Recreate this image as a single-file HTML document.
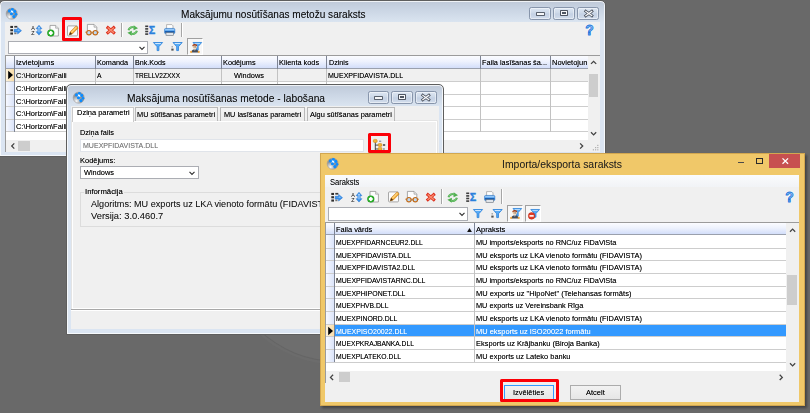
<!DOCTYPE html>
<html lang="lv"><head><meta charset="utf-8"><title>Maksājumu nosūtīšanas metožu saraksts</title>
<style>
html,body{margin:0;padding:0;}
body{width:810px;height:413px;overflow:hidden;background:#696969;position:relative;font-family:"Liberation Sans",sans-serif;}
.t{position:absolute;white-space:pre;line-height:12px;height:12px;transform-origin:0 50%;font-family:"Liberation Sans",sans-serif;}
svg{overflow:visible;display:block;}
</style></head><body>
<div style="position:absolute;left:226.00px;top:139.00px;width:222.00px;height:222.00px;border-radius:50%;background:#6e6e6e;box-shadow:0 0 0 1px #656565,0 0 0 3.5px #6c6c6c;"></div>
<div style="position:absolute;left:-0.70px;top:0.00px;width:606.20px;height:157.30px;box-sizing:border-box;border:1px solid #5e5e5e;border-radius:5px 5px 1px 1px;background:linear-gradient(#bfc9d8 0px,#c9d4e3 8px,#dae4f0 21px,#dbe5f2 22px);box-shadow:inset 0 0 0 1px rgba(255,255,255,.75);overflow:hidden;"><svg style="position:absolute;left:5.90px;top:6.70px" width="11.4" height="11.4" viewBox="0 0 11.4 11.4"><defs><radialGradient id="gg1" cx=".3" cy=".8" r=".45"><stop offset="0" stop-color="#ffffff"/><stop offset=".3" stop-color="#d4d7da"/><stop offset="1" stop-color="#8f959c"/></radialGradient></defs><circle cx="5.700" cy="5.700" r="5.600" fill="url(#gg1)" stroke="#a39a96" stroke-width=".5"/><path d="M5.500 1.500L8.700 3.400 7 5 5.500 5.800 3.500 2.900z" fill="#f2f6fa"/><circle cx="3.500" cy="2.900" r="1.550" fill="#0c8cff"/><circle cx="6.400" cy="1.400" r="1.450" fill="#0c8cff"/><circle cx="8.700" cy="3.400" r="1.550" fill="#0c8cff"/><circle cx="5.500" cy="5.800" r="1.550" fill="#0c8cff"/><circle cx="10" cy="6.300" r="1.350" fill="#0c8cff"/><circle cx="7.900" cy="8.600" r="1.550" fill="#0c8cff"/></svg><span class="t" style="left:180.60px;top:8.40px;font-size:10.2px;transform:scaleX(0.9878);color:#0a0a0a;text-shadow:0 0 .6px rgba(10,10,10,0.3);">Maksājumu nosūtīšanas metožu saraksts</span><div style="position:absolute;left:529.00px;top:6.10px;width:21.60px;height:12.50px;box-sizing:border-box;border:1px solid #8795ab;border-radius:2.3px;background:linear-gradient(#dde6f2,#ccd8e8 48%,#c3d0e3 52%,#d2ddec);box-shadow:inset 0 0 0 1px rgba(255,255,255,.45);"><div style="position:absolute;left:5.8px;top:4px;width:8.4px;height:3.6px;background:#f6f7f9;border:1px solid #59616d;border-radius:.8px;box-sizing:border-box"></div></div><div style="position:absolute;left:552.90px;top:6.10px;width:21.60px;height:12.50px;box-sizing:border-box;border:1px solid #8795ab;border-radius:2.3px;background:linear-gradient(#dde6f2,#ccd8e8 48%,#c3d0e3 52%,#d2ddec);box-shadow:inset 0 0 0 1px rgba(255,255,255,.45);"><div style="position:absolute;left:5.6px;top:1.8px;width:8.4px;height:6.2px;background:#f6f7f9;border:1px solid #4f5662;border-radius:.8px;box-sizing:border-box"></div><div style="position:absolute;left:7.8px;top:4px;width:4px;height:2px;background:#4f5662"></div></div><div style="position:absolute;left:576.80px;top:6.10px;width:21.60px;height:12.50px;box-sizing:border-box;border:1px solid #8795ab;border-radius:2.3px;background:linear-gradient(#dde6f2,#ccd8e8 48%,#c3d0e3 52%,#d2ddec);box-shadow:inset 0 0 0 1px rgba(255,255,255,.45);"><svg style="position:absolute;left:5.4px;top:1.6px" width="9.6" height="7" viewBox="0 0 9.6 7"><path d="M1.800 1.300l6 4.400M7.800 1.300l-6 4.400" stroke="#4f5662" stroke-width="2.900" stroke-linecap="square"/><path d="M1.900 1.400l5.800 4.200M7.700 1.400L1.900 5.600" stroke="#f6f7f9" stroke-width="1.300" stroke-linecap="square"/></svg></div><div style="position:absolute;left:4.90px;top:20.80px;width:595.20px;height:130.40px;background:#f0f0f0;overflow:hidden;"><svg style="position:absolute;left:4.80px;top:3.40px" width="12" height="11" viewBox="0 0 12 11"><rect x="0.3" y="0.9" width="2.7" height="2.1" fill="#2e2e2e"/><rect x="0.3" y="4.2" width="2.7" height="2.1" fill="#2e2e2e"/><rect x="0.3" y="7.5" width="2.7" height="2.1" fill="#2e2e2e"/><rect x="4.3" y=".9" width="3" height="1.7" fill="#3a3a3a"/><rect x="4.3" y="7.5" width="2.2" height="1.7" fill="#777"/><path d="M4.2 4.3h3.4V2.4l3.9 3.3-3.9 3.3V7.1H4.2z" fill="#3b93ec" stroke="#1b6fd0" stroke-width=".5"/><path d="M5 5.2h3.3V4.3l1.6 1.4z" fill="#b9dcff"/></svg><svg style="position:absolute;left:25.30px;top:3.00px" width="11" height="11" viewBox="0 0 11 11"><g style="filter:grayscale(1)"><text x="0.2" y="4.9" font-family="Liberation Sans, sans-serif" font-size="5.4" fill="#111">A</text><text x="0.3" y="10.4" font-family="Liberation Sans, sans-serif" font-size="5.4" fill="#111">Z</text></g><path d="M8 .3l2.900 3.400H9.200v3h1.700L8 10.100 5.100 6.700h1.700v-3H5.100z" fill="#3b93ec" stroke="#1b6fd0" stroke-width=".5"/><path d="M8 1.600l1.200 1.500H8.500v4.200H7.500V3.100h-.7z" fill="#b9dcff"/></svg><svg style="position:absolute;left:41.60px;top:2.80px" width="12" height="12" viewBox="0 0 12 12"><path d="M3 0.4h5.6000000000000005l2.8 2.8v7.8h-8.4z" fill="#fcfcfc" stroke="#8e8e8e" stroke-width=".75"/><path d="M8.600000000000001 0.4v2.8h2.8" fill="#e4e4e4" stroke="#8e8e8e" stroke-width=".55"/><circle cx="3.8" cy="8" r="3.6" fill="#1c961c"/><circle cx="3.8" cy="8" r="2.9" fill="#2fb52f"/><path d="M3.8 6.1v3.8M1.9 8h3.8" stroke="#fff" stroke-width="1.9"/></svg><svg style="position:absolute;left:62.20px;top:2.80px" width="12" height="12" viewBox="0 0 12 12"><rect x=".5" y=".9" width="10" height="10" rx="1" fill="#fbfbfb" stroke="#8e8e8e" stroke-width=".75"/><path d="M2.2 9.9l.9-3 5.9-6 2.2 2-5.9 6.1z" fill="#f3ab35" stroke="#bf7412" stroke-width=".55"/><path d="M4 6.9l5-5.1.8.7-5 5.2z" fill="#ffd98a"/><path d="M2.2 9.9l.9-3 2.1 2.1z" fill="#4a2f16"/></svg><svg style="position:absolute;left:79.40px;top:2.60px" width="14" height="12" viewBox="0 0 14 12"><path d="M2.4 0.4h6.6000000000000005l2.8 2.8v6.000000000000001h-9.4z" fill="#fcfcfc" stroke="#8e8e8e" stroke-width=".75"/><path d="M9.0 0.4v2.8h2.8" fill="#e4e4e4" stroke="#8e8e8e" stroke-width=".55"/><circle cx="3.900" cy="8.700" r="2.200" fill="#bcd8f2" stroke="#c36a16" stroke-width="1.150"/><circle cx="10.300" cy="8.700" r="2.200" fill="#bcd8f2" stroke="#c36a16" stroke-width="1.150"/><path d="M6.300 8.300h1.600M.4 8.200l1.200.2M13.800 8.200l-1.200.2" stroke="#c36a16" stroke-width="1"/></svg><svg style="position:absolute;left:101.00px;top:4.70px" width="9.6" height="8.3" viewBox="0 0 9.6 8.3"><path d="M1.900 1.700l5.800 4.900M7.700 1.700L1.900 6.600" stroke="#dc2a18" stroke-width="3" stroke-linecap="square"/><path d="M2.100 1.900l5.400 4.500M7.500 1.900l-5.400 4.500" stroke="#f8896c" stroke-width="1.400" stroke-linecap="square"/></svg><div style="position:absolute;left:115.80px;top:1.00px;width:1.00px;height:14.60px;background:#a6a6a6;box-shadow:1px 0 0 #fff;"></div><svg style="position:absolute;left:121.60px;top:3.00px" width="11.4" height="11" viewBox="0 0 11.4 11"><path d="M1.5 5.300A4.300 4.300 0 0 1 7.600 2.500" fill="none" stroke="#4fae4f" stroke-width="2.100"/><path d="M6.700 .2L11 3.300 6.500 5.300z" fill="#4fae4f"/><path d="M2 4.600A3.800 3.800 0 0 1 7.400 2.300" fill="none" stroke="#8fd68f" stroke-width=".7"/><g transform="rotate(180 5.700 5.500)"><path d="M1.5 5.300A4.300 4.300 0 0 1 7.600 2.500" fill="none" stroke="#4fae4f" stroke-width="2.100"/><path d="M6.700 .2L11 3.300 6.500 5.300z" fill="#4fae4f"/><path d="M2 4.600A3.800 3.800 0 0 1 7.400 2.300" fill="none" stroke="#8fd68f" stroke-width=".7"/></g></svg><svg style="position:absolute;left:140.20px;top:3.00px" width="11.4" height="11" viewBox="0 0 11.4 11"><rect x="0.2" y="0.5" width="3" height="1.6" fill="#3c3c3c"/><rect x="0.2" y="3.1" width="3" height="1.6" fill="#3c3c3c"/><rect x="0.2" y="5.7" width="3" height="1.6" fill="#3c3c3c"/><rect x="0.2" y="8.3" width="3" height="1.6" fill="#3c3c3c"/><g transform="scale(.98 1)"><text x="3.8" y="9.4" font-family="Liberation Sans, sans-serif" font-size="11" font-weight="bold" fill="#2a80dc" stroke="#2a80dc" stroke-width=".35">Σ</text></g></svg><svg style="position:absolute;left:158.60px;top:2.60px" width="11.4" height="11.8" viewBox="0 0 11.4 11.8"><path d="M2.6 5V.6h5.2l1.2 1.2V5z" fill="#fff" stroke="#8a8a8a" stroke-width=".6"/><rect x=".5" y="4.4" width="10.4" height="5.2" rx="1.2" fill="#56a6f2" stroke="#2a6fbe" stroke-width=".5"/><rect x="1.2" y="5.2" width="9" height="1" fill="#a8d2fb"/><rect x=".9" y="7.1" width="9.6" height="1.5" fill="#1558aa"/><rect x="2" y="8.7" width="7.4" height="2.6" fill="#dfe4ea" stroke="#5c6672" stroke-width=".55"/></svg><div style="position:absolute;left:175.40px;top:1.00px;width:1.00px;height:14.60px;background:#a6a6a6;box-shadow:1px 0 0 #fff;"></div><svg style="position:absolute;left:580.20px;top:1.80px" width="9" height="12" viewBox="0 0 9 12"><g transform="scale(.9 1)"><text x="0.3" y="11.300" font-family="Liberation Sans, sans-serif" font-size="15.500" font-weight="bold" fill="#fff" stroke="#fff" stroke-width="2.200" opacity=".75">?</text><text x="0.3" y="11.300" font-family="Liberation Sans, sans-serif" font-size="15.500" font-weight="bold" fill="#8cc2f8" stroke="#2475d8" stroke-width=".9">?</text></g></svg><div style="position:absolute;left:2.40px;top:18.80px;width:140.20px;height:13.40px;background:#fff;border:1px solid #abadb3;box-sizing:border-box;"><svg style="position:absolute;left:127px;top:0" width="12" height="12" viewBox="0 0 12 12"><path d="M3.5 4.95L6 7.45L8.5 4.95" fill="none" stroke="#333" stroke-width="1.2"/></svg></div><svg style="position:absolute;left:147.80px;top:20.20px" width="10" height="9" viewBox="0 0 10 9"><path transform="translate(0 0) scale(1)" d="M.4 .5H9.600L5.900 4.700V8.600H4.100V4.700z" fill="#58abf6" stroke="#1f7ad8" stroke-width=".75" stroke-linejoin="round"/><path transform="translate(0 0) scale(1)" d="M1.800 1.100h6.400l-.7.800H2.500z" fill="#cfe8ff"/></svg><svg style="position:absolute;left:165.40px;top:20.20px" width="11.4" height="9" viewBox="0 0 11.4 9"><path transform="translate(1.6 0) scale(1)" d="M.4 .5H9.600L5.900 4.700V8.600H4.100V4.700z" fill="#58abf6" stroke="#1f7ad8" stroke-width=".75" stroke-linejoin="round"/><path transform="translate(1.6 0) scale(1)" d="M1.800 1.100h6.400l-.7.800H2.500z" fill="#cfe8ff"/><rect x=".3" y="6.600" width="2.300" height="2" fill="#505050"/><rect x=".6" y="4.300" width="1.200" height="1.100" fill="#777"/></svg><div style="position:absolute;left:182.00px;top:16.60px;width:16.00px;height:16.40px;background:#f7f7f7;border:1px solid;border-color:#a0a0a0 #fff #fff #a0a0a0;box-sizing:border-box;"></div><svg style="position:absolute;left:184.40px;top:19.80px" width="12" height="11.4" viewBox="0 0 12 11.4"><path transform="translate(2.6 0) scale(0.95)" d="M.4 .5H9.600L5.900 4.700V8.600H4.100V4.700z" fill="#58abf6" stroke="#1f7ad8" stroke-width=".75" stroke-linejoin="round"/><path transform="translate(2.6 0) scale(0.95)" d="M1.800 1.100h6.400l-.7.800H2.500z" fill="#cfe8ff"/><circle cx="4.800" cy="4.600" r="2.300" fill="#f6d6b6"/><path d="M2.300 4.300c-.2-3.200 5.200-3.200 5 0-1.400-1.100-3.600-1.100-5 0z" fill="#9a3412"/><rect x="3.700" y="4.500" width=".8" height=".9" fill="#333"/><rect x="5.300" y="4.500" width=".8" height=".9" fill="#333"/><path d="M1.300 10.400c0-4.300 7.200-4.300 7.200 0z" fill="#474e5a"/><path d="M4.300 7.200l.6 1.800.6-1.800z" fill="#e8ecf0"/><circle cx="1.100" cy="9.900" r="1.050" fill="#f2a43c"/><circle cx="8.800" cy="9.900" r="1.050" fill="#f2a43c"/></svg><div style="position:absolute;left:0.00px;top:33.40px;width:595.20px;height:97.00px;border-top:1px solid #9b9b9b;border-left:1px solid #9b9b9b;box-sizing:border-box;overflow:hidden;"><div style="position:absolute;left:-1.00px;top:-1.00px;width:595.20px;height:97.00px;"><div style="position:absolute;left:0.00px;top:0.00px;width:595.20px;height:97.00px;background:#fff;"></div><div style="position:absolute;left:0.00px;top:0.80px;width:582.60px;height:12.80px;background:linear-gradient(#fbfcff 0%,#eef2fd 45%,#d3defa 100%);border-bottom:1px solid #9aa0ad;box-sizing:border-box;"></div><div style="position:absolute;left:9.00px;top:13.60px;width:573.60px;height:12.62px;background:#f0f0f0;"></div><div style="position:absolute;left:1.00px;top:13.60px;width:8.00px;height:12.62px;background:linear-gradient(90deg,#fdf3dc,#f9dca6);"></div><div style="position:absolute;left:1.00px;top:26.22px;width:8.00px;height:12.62px;background:linear-gradient(90deg,#f7f9ff,#dbe4fa);"></div><div style="position:absolute;left:1.00px;top:38.84px;width:8.00px;height:12.62px;background:linear-gradient(90deg,#f7f9ff,#dbe4fa);"></div><div style="position:absolute;left:1.00px;top:51.46px;width:8.00px;height:12.62px;background:linear-gradient(90deg,#f7f9ff,#dbe4fa);"></div><div style="position:absolute;left:1.00px;top:64.08px;width:8.00px;height:12.62px;background:linear-gradient(90deg,#f7f9ff,#dbe4fa);"></div><svg style="position:absolute;left:1.40px;top:14.90px" width="8" height="10" viewBox="0 0 8 10"><path d="M1.2 .8L6 5 1.2 9.2z" fill="#000"/></svg><div style="position:absolute;left:0.00px;top:25.72px;width:582.60px;height:1.00px;background:#cdcdcd;"></div><div style="position:absolute;left:0.00px;top:38.34px;width:582.60px;height:1.00px;background:#cdcdcd;"></div><div style="position:absolute;left:0.00px;top:50.96px;width:582.60px;height:1.00px;background:#cdcdcd;"></div><div style="position:absolute;left:0.00px;top:63.58px;width:582.60px;height:1.00px;background:#cdcdcd;"></div><div style="position:absolute;left:0.00px;top:76.20px;width:582.60px;height:1.00px;background:#cdcdcd;"></div><div style="position:absolute;left:8.50px;top:0.80px;width:1.00px;height:12.80px;background:#7d8494;"></div><div style="position:absolute;left:8.50px;top:13.60px;width:1.00px;height:63.10px;background:#7d8494;"></div><div style="position:absolute;left:89.30px;top:0.80px;width:1.00px;height:12.80px;background:#7d8494;"></div><div style="position:absolute;left:89.30px;top:13.60px;width:1.00px;height:63.10px;background:#c2c2c2;"></div><div style="position:absolute;left:127.60px;top:0.80px;width:1.00px;height:12.80px;background:#7d8494;"></div><div style="position:absolute;left:127.60px;top:13.60px;width:1.00px;height:63.10px;background:#c2c2c2;"></div><div style="position:absolute;left:215.30px;top:0.80px;width:1.00px;height:12.80px;background:#7d8494;"></div><div style="position:absolute;left:215.30px;top:13.60px;width:1.00px;height:63.10px;background:#c2c2c2;"></div><div style="position:absolute;left:271.30px;top:0.80px;width:1.00px;height:12.80px;background:#7d8494;"></div><div style="position:absolute;left:271.30px;top:13.60px;width:1.00px;height:63.10px;background:#c2c2c2;"></div><div style="position:absolute;left:320.70px;top:0.80px;width:1.00px;height:12.80px;background:#7d8494;"></div><div style="position:absolute;left:320.70px;top:13.60px;width:1.00px;height:63.10px;background:#c2c2c2;"></div><div style="position:absolute;left:474.50px;top:0.80px;width:1.00px;height:12.80px;background:#7d8494;"></div><div style="position:absolute;left:474.50px;top:13.60px;width:1.00px;height:63.10px;background:#c2c2c2;"></div><div style="position:absolute;left:544.60px;top:0.80px;width:1.00px;height:12.80px;background:#7d8494;"></div><div style="position:absolute;left:544.60px;top:13.60px;width:1.00px;height:63.10px;background:#c2c2c2;"></div><div style="position:absolute;left:10.00px;top:0.80px;width:78.80px;height:12.80px;overflow:hidden;"><span class="t" style="left:1.20px;top:1.20px;font-size:8.0px;transform:scaleX(0.9547);color:#000;text-shadow:0 0 .6px rgba(0,0,0,0.5);">Izvietojums</span></div><div style="position:absolute;left:90.80px;top:0.80px;width:36.30px;height:12.80px;overflow:hidden;"><span class="t" style="left:1.20px;top:1.20px;font-size:8.0px;transform:scaleX(0.9066);color:#000;text-shadow:0 0 .6px rgba(0,0,0,0.5);">Komanda</span></div><div style="position:absolute;left:129.10px;top:0.80px;width:85.70px;height:12.80px;overflow:hidden;"><span class="t" style="left:1.20px;top:1.20px;font-size:8.0px;transform:scaleX(0.8950);color:#000;text-shadow:0 0 .6px rgba(0,0,0,0.5);">Bnk.Kods</span></div><div style="position:absolute;left:216.80px;top:0.80px;width:54.00px;height:12.80px;overflow:hidden;"><span class="t" style="left:1.20px;top:1.20px;font-size:8.0px;transform:scaleX(0.9161);color:#000;text-shadow:0 0 .6px rgba(0,0,0,0.5);">Kodējums</span></div><div style="position:absolute;left:272.80px;top:0.80px;width:47.40px;height:12.80px;overflow:hidden;"><span class="t" style="left:1.20px;top:1.20px;font-size:8.0px;transform:scaleX(0.9215);color:#000;text-shadow:0 0 .6px rgba(0,0,0,0.5);">Klienta kods</span></div><div style="position:absolute;left:322.20px;top:0.80px;width:151.80px;height:12.80px;overflow:hidden;"><span class="t" style="left:1.20px;top:1.20px;font-size:8.0px;transform:scaleX(0.8931);color:#000;text-shadow:0 0 .6px rgba(0,0,0,0.5);">Dzinis</span></div><div style="position:absolute;left:476.00px;top:0.80px;width:68.10px;height:12.80px;overflow:hidden;"><span class="t" style="left:1.20px;top:1.20px;font-size:8.0px;transform:scaleX(0.9194);color:#000;text-shadow:0 0 .6px rgba(0,0,0,0.5);">Faila lasīšanas ša...</span></div><div style="position:absolute;left:546.10px;top:0.80px;width:35.50px;height:12.80px;overflow:hidden;"><span class="t" style="left:1.20px;top:1.20px;font-size:8.0px;transform:scaleX(0.9350);color:#000;text-shadow:0 0 .6px rgba(0,0,0,0.5);">Novietojums</span></div><span class="t" style="left:11.00px;top:15.11px;font-size:8.0px;transform:scaleX(0.9272);color:#000;text-shadow:0 0 .6px rgba(0,0,0,0.5);">C:\Horizon\Faili</span><span class="t" style="left:91.60px;top:15.11px;font-size:8.0px;transform:scaleX(0.8448);color:#000;text-shadow:0 0 .6px rgba(0,0,0,0.5);">A</span><span class="t" style="left:130.00px;top:15.11px;font-size:8.0px;transform:scaleX(0.8184);color:#000;text-shadow:0 0 .6px rgba(0,0,0,0.5);">TRELLV2ZXXX</span><span class="t" style="left:228.83px;top:15.11px;font-size:8.0px;transform:scaleX(0.9223);color:#000;text-shadow:0 0 .6px rgba(0,0,0,0.5);">Windows</span><span class="t" style="left:323.00px;top:15.11px;font-size:8.0px;transform:scaleX(0.8790);color:#000;text-shadow:0 0 .6px rgba(0,0,0,0.5);">MUEXPFIDAVISTA.DLL</span><span class="t" style="left:11.00px;top:27.73px;font-size:8.0px;transform:scaleX(0.9272);color:#000;text-shadow:0 0 .6px rgba(0,0,0,0.5);">C:\Horizon\Faili</span><span class="t" style="left:11.00px;top:40.35px;font-size:8.0px;transform:scaleX(0.9272);color:#000;text-shadow:0 0 .6px rgba(0,0,0,0.5);">C:\Horizon\Faili</span><span class="t" style="left:11.00px;top:52.97px;font-size:8.0px;transform:scaleX(0.9272);color:#000;text-shadow:0 0 .6px rgba(0,0,0,0.5);">C:\Horizon\Faili</span><span class="t" style="left:11.00px;top:65.59px;font-size:8.0px;transform:scaleX(0.9272);color:#000;text-shadow:0 0 .6px rgba(0,0,0,0.5);">C:\Horizon\Faili</span><div style="position:absolute;left:582.60px;top:0.80px;width:12.60px;height:84.00px;background:#f0f0f0;"></div><div style="position:absolute;left:583.60px;top:18.80px;width:9.20px;height:23.40px;background:#cdcdcd;"></div><div style="position:absolute;left:0.00px;top:84.80px;width:595.20px;height:12.20px;background:#f0f0f0;"></div><div style="position:absolute;left:13.00px;top:85.60px;width:11.60px;height:10.00px;background:#cdcdcd;"></div><svg style="position:absolute;left:-5.2px;top:-55.2px" width="810" height="413" viewBox="0 0 810 413"><path d="M591.0 63.9L593.6 61.300000000000004L596.2 63.9" fill="none" stroke="#444" stroke-width="1.3"/><path d="M591.0 132.29999999999998L593.6 134.9L596.2 132.29999999999998" fill="none" stroke="#444" stroke-width="1.3"/><path d="M14.3 143.4L11.7 146L14.3 148.6" fill="none" stroke="#444" stroke-width="1.3"/><path d="M580.1 143.4L582.6999999999999 146L580.1 148.6" fill="none" stroke="#444" stroke-width="1.3"/><rect x="597.2" y="149.2" width="1.2" height="1.2" fill="#b0b0b0"/><rect x="597.2" y="147.0" width="1.2" height="1.2" fill="#b0b0b0"/><rect x="595.0" y="149.2" width="1.2" height="1.2" fill="#b0b0b0"/><rect x="597.2" y="144.79999999999998" width="1.2" height="1.2" fill="#b0b0b0"/><rect x="595.0" y="147.0" width="1.2" height="1.2" fill="#b0b0b0"/><rect x="592.8000000000001" y="149.2" width="1.2" height="1.2" fill="#b0b0b0"/></svg></div></div></div></div>
<div style="position:absolute;left:62.00px;top:16.90px;width:20.00px;height:24.50px;border:3px solid #fb0007;border-radius:1.5px;box-sizing:border-box;"></div>
<div style="position:absolute;left:66.00px;top:84.00px;width:378.20px;height:251.20px;box-sizing:border-box;border:1px solid #5e5e5e;border-radius:5px 5px 1px 1px;background:linear-gradient(#bfc9d8 0px,#c9d4e3 8px,#dae4f0 21px,#dbe5f2 22px);box-shadow:inset 0 0 0 1px rgba(255,255,255,.75);overflow:hidden;"><svg style="position:absolute;left:6.10px;top:6.70px" width="11.4" height="11.4" viewBox="0 0 11.4 11.4"><defs><radialGradient id="gg2" cx=".3" cy=".8" r=".45"><stop offset="0" stop-color="#ffffff"/><stop offset=".3" stop-color="#d4d7da"/><stop offset="1" stop-color="#8f959c"/></radialGradient></defs><circle cx="5.700" cy="5.700" r="5.600" fill="url(#gg2)" stroke="#a39a96" stroke-width=".5"/><path d="M5.500 1.500L8.700 3.400 7 5 5.500 5.800 3.500 2.900z" fill="#f2f6fa"/><circle cx="3.500" cy="2.900" r="1.550" fill="#0c8cff"/><circle cx="6.400" cy="1.400" r="1.450" fill="#0c8cff"/><circle cx="8.700" cy="3.400" r="1.550" fill="#0c8cff"/><circle cx="5.500" cy="5.800" r="1.550" fill="#0c8cff"/><circle cx="10" cy="6.300" r="1.350" fill="#0c8cff"/><circle cx="7.900" cy="8.600" r="1.550" fill="#0c8cff"/></svg><span class="t" style="left:59.85px;top:8.20px;font-size:10.2px;transform:scaleX(1.0050);color:#0a0a0a;text-shadow:0 0 .6px rgba(10,10,10,0.3);">Maksājuma nosūtīšanas metode - labošana</span><div style="position:absolute;left:300.50px;top:6.40px;width:21.60px;height:12.50px;box-sizing:border-box;border:1px solid #8795ab;border-radius:2.3px;background:linear-gradient(#dde6f2,#ccd8e8 48%,#c3d0e3 52%,#d2ddec);box-shadow:inset 0 0 0 1px rgba(255,255,255,.45);"><div style="position:absolute;left:5.8px;top:4px;width:8.4px;height:3.6px;background:#f6f7f9;border:1px solid #59616d;border-radius:.8px;box-sizing:border-box"></div></div><div style="position:absolute;left:324.30px;top:6.40px;width:21.60px;height:12.50px;box-sizing:border-box;border:1px solid #8795ab;border-radius:2.3px;background:linear-gradient(#dde6f2,#ccd8e8 48%,#c3d0e3 52%,#d2ddec);box-shadow:inset 0 0 0 1px rgba(255,255,255,.45);"><div style="position:absolute;left:5.6px;top:1.8px;width:8.4px;height:6.2px;background:#f6f7f9;border:1px solid #4f5662;border-radius:.8px;box-sizing:border-box"></div><div style="position:absolute;left:7.8px;top:4px;width:4px;height:2px;background:#4f5662"></div></div><div style="position:absolute;left:348.10px;top:6.40px;width:21.60px;height:12.50px;box-sizing:border-box;border:1px solid #8795ab;border-radius:2.3px;background:linear-gradient(#dde6f2,#ccd8e8 48%,#c3d0e3 52%,#d2ddec);box-shadow:inset 0 0 0 1px rgba(255,255,255,.45);"><svg style="position:absolute;left:5.4px;top:1.6px" width="9.6" height="7" viewBox="0 0 9.6 7"><path d="M1.800 1.300l6 4.400M7.800 1.300l-6 4.400" stroke="#4f5662" stroke-width="2.900" stroke-linecap="square"/><path d="M1.900 1.400l5.800 4.200M7.700 1.400L1.900 5.600" stroke="#f6f7f9" stroke-width="1.300" stroke-linecap="square"/></svg></div><div style="position:absolute;left:4.20px;top:20.80px;width:367.80px;height:223.60px;background:#f0f0f0;overflow:hidden;"><div style="position:absolute;left:0.80px;top:14.80px;width:365.00px;height:188.20px;background:#f0f0f0;border:1px solid #fff;box-sizing:border-box;box-shadow:0 0 0 .6px #dcdcdc;"></div><div style="position:absolute;left:0.80px;top:0.80px;width:62.20px;height:15.00px;background:#fff;border:1px solid #c9c9c9;border-bottom:none;box-sizing:border-box;"></div><span class="t" style="left:5.55px;top:1.60px;font-size:8.0px;transform:scaleX(0.9333);color:#000;text-shadow:0 0 .6px rgba(0,0,0,0.5);">Dziņa parametri</span><div style="position:absolute;left:63.40px;top:1.60px;width:83.60px;height:13.30px;background:linear-gradient(#f4f4f4,#ececec);border:1px solid #b9b9b9;border-bottom:none;box-sizing:border-box;"></div><span class="t" style="left:66.16px;top:2.80px;font-size:8.0px;transform:scaleX(0.9196);color:#000;text-shadow:0 0 .6px rgba(0,0,0,0.5);">MU sūtīšanas parametri</span><div style="position:absolute;left:149.00px;top:1.60px;width:85.20px;height:13.30px;background:linear-gradient(#f4f4f4,#ececec);border:1px solid #b9b9b9;border-bottom:none;box-sizing:border-box;"></div><span class="t" style="left:153.07px;top:2.80px;font-size:8.0px;transform:scaleX(0.9121);color:#000;text-shadow:0 0 .6px rgba(0,0,0,0.5);">MU lasīšanas parametri</span><div style="position:absolute;left:236.00px;top:1.60px;width:87.60px;height:13.30px;background:linear-gradient(#f4f4f4,#ececec);border:1px solid #b9b9b9;border-bottom:none;box-sizing:border-box;"></div><span class="t" style="left:238.83px;top:2.80px;font-size:8.0px;transform:scaleX(0.9260);color:#000;text-shadow:0 0 .6px rgba(0,0,0,0.5);">Algu sūtīšanas parametri</span><span class="t" style="left:8.80px;top:20.80px;font-size:8.0px;transform:scaleX(0.9163);color:#000;text-shadow:0 0 .6px rgba(0,0,0,0.5);">Dziņa fails</span><div style="position:absolute;left:9.20px;top:33.20px;width:283.60px;height:13.20px;background:#fff;border:1px solid #e0e4ea;box-sizing:border-box;"></div><span class="t" style="left:11.80px;top:33.80px;font-size:8.0px;transform:scaleX(0.8790);color:#7a7a7a;text-shadow:0 0 .6px rgba(122,122,122,0.5);">MUEXPFIDAVISTA.DLL</span><svg style="position:absolute;left:301.80px;top:33.50px" width="12.4" height="12" viewBox="0 0 12.4 12"><path d="M2.300 2.800v9M2.300 6.100h4M2.300 10h4" stroke="#2c2c2c" stroke-width=".85" fill="none"/><rect x=".3" y=".4" width="3.900" height="3.100" rx="1.200" fill="#f4b234" stroke="#c98a1c" stroke-width=".55"/><rect x="5.100" y="4.500" width="3.900" height="3" rx="1.200" fill="#f4b234" stroke="#c98a1c" stroke-width=".55"/><rect x="5.100" y="8.400" width="3.900" height="3" rx="1.200" fill="#f4b234" stroke="#c98a1c" stroke-width=".55"/><rect x="6" y="1.600" width="2.200" height="1.300" fill="#9096a0"/><rect x="10" y="5.300" width="2.200" height="1.400" fill="#333"/><rect x="10" y="9.300" width="1.800" height="1.400" fill="#8a8f98"/></svg><span class="t" style="left:8.80px;top:49.00px;font-size:8.0px;transform:scaleX(0.9328);color:#000;text-shadow:0 0 .6px rgba(0,0,0,0.5);">Kodējums:</span><div style="position:absolute;left:9.20px;top:60.00px;width:118.20px;height:13.50px;background:#fff;border:1px solid #abadb3;box-sizing:border-box;"><svg style="position:absolute;left:105px;top:0" width="12" height="12" viewBox="0 0 12 12"><path d="M3.5 4.95L6 7.45L8.5 4.95" fill="none" stroke="#333" stroke-width="1.2"/></svg></div><span class="t" style="left:12.60px;top:60.90px;font-size:8.0px;transform:scaleX(0.9223);color:#000;text-shadow:0 0 .6px rgba(0,0,0,0.5);">Windows</span><div style="position:absolute;left:9.20px;top:86.20px;width:360.00px;height:34.60px;border:1px solid #dcdcdc;box-sizing:border-box;"></div><div style="position:absolute;left:12.80px;top:80.20px;width:40.40px;height:12.00px;background:#f0f0f0;"></div><span class="t" style="left:14.20px;top:80.20px;font-size:8.0px;transform:scaleX(0.9645);color:#000;text-shadow:0 0 .6px rgba(0,0,0,0.5);">Informācija</span><span class="t" style="left:19.80px;top:92.60px;font-size:9.2px;transform:scaleX(0.9913);color:#111;text-shadow:0 0 .6px rgba(17,17,17,0.25);">Algoritms: MU exports uz LKA vienoto formātu (FIDAVISTA)</span><span class="t" style="left:19.80px;top:104.00px;font-size:9.2px;transform:scaleX(1.0174);color:#111;text-shadow:0 0 .6px rgba(17,17,17,0.25);">Versija: 3.0.460.7</span><div style="position:absolute;left:0.00px;top:203.40px;width:367.80px;height:1.00px;background:#a8a8a8;box-shadow:0 1px 0 #fff;"></div></div></div>
<div style="position:absolute;left:368.40px;top:132.60px;width:22.60px;height:20.80px;border:3px solid #fb0007;border-radius:1.5px;box-sizing:border-box;"></div>
<div style="position:absolute;left:319.60px;top:153.00px;width:485.60px;height:253.20px;box-sizing:border-box;border:1px solid #d2a750;background:#f0c869;box-shadow:1.5px 1.5px 2.5px rgba(0,0,0,.38);"><svg style="position:absolute;left:6.00px;top:3.80px" width="11.4" height="11.4" viewBox="0 0 11.4 11.4"><defs><radialGradient id="gg3" cx=".3" cy=".8" r=".45"><stop offset="0" stop-color="#ffffff"/><stop offset=".3" stop-color="#d4d7da"/><stop offset="1" stop-color="#8f959c"/></radialGradient></defs><circle cx="5.700" cy="5.700" r="5.600" fill="url(#gg3)" stroke="#a39a96" stroke-width=".5"/><path d="M5.500 1.500L8.700 3.400 7 5 5.500 5.800 3.500 2.900z" fill="#f2f6fa"/><circle cx="3.500" cy="2.900" r="1.550" fill="#0c8cff"/><circle cx="6.400" cy="1.400" r="1.450" fill="#0c8cff"/><circle cx="8.700" cy="3.400" r="1.550" fill="#0c8cff"/><circle cx="5.500" cy="5.800" r="1.550" fill="#0c8cff"/><circle cx="10" cy="6.300" r="1.350" fill="#0c8cff"/><circle cx="7.900" cy="8.600" r="1.550" fill="#0c8cff"/></svg><span class="t" style="left:181.90px;top:5.20px;font-size:10.3px;transform:scaleX(1.0127);color:#1c1c1c;text-shadow:0 0 .6px rgba(28,28,28,0.15);">Importa/eksporta saraksts</span><div style="position:absolute;left:448.40px;top:-0.40px;width:30.90px;height:13.90px;background:#c75050;"><svg style="position:absolute;left:12.6px;top:4.2px" width="6.6" height="6.2" viewBox="0 0 6.6 6.2"><path d="M.5 .4l5.600 5.400M6.100 .4L.5 5.800" stroke="#fff" stroke-width="1.300"/></svg></div><div style="position:absolute;left:435.60px;top:4.00px;width:7.00px;height:5.80px;border:1px solid #2a2a2a;border-top-width:1.8px;box-sizing:border-box;"></div><div style="position:absolute;left:417.40px;top:7.90px;width:5.80px;height:1.10px;background:#4a4a4a;"></div><div style="position:absolute;left:4.60px;top:20.80px;width:474.20px;height:226.80px;background:#f0f0f0;overflow:hidden;"><div style="position:absolute;left:0.00px;top:0.00px;width:474.20px;height:12.40px;background:linear-gradient(#fafbfc,#f1f3f6);"></div><span class="t" style="left:5.00px;top:1.10px;font-size:8.7px;transform:scaleX(0.8687);color:#000;text-shadow:0 0 .6px rgba(0,0,0,0.3);">Saraksts</span><svg style="position:absolute;left:5.40px;top:17.20px" width="12" height="11" viewBox="0 0 12 11"><rect x="0.3" y="0.9" width="2.7" height="2.1" fill="#2e2e2e"/><rect x="0.3" y="4.2" width="2.7" height="2.1" fill="#2e2e2e"/><rect x="0.3" y="7.5" width="2.7" height="2.1" fill="#2e2e2e"/><rect x="4.3" y=".9" width="3" height="1.7" fill="#3a3a3a"/><rect x="4.3" y="7.5" width="2.2" height="1.7" fill="#777"/><path d="M4.2 4.3h3.4V2.4l3.9 3.3-3.9 3.3V7.1H4.2z" fill="#3b93ec" stroke="#1b6fd0" stroke-width=".5"/><path d="M5 5.2h3.3V4.3l1.6 1.4z" fill="#b9dcff"/></svg><svg style="position:absolute;left:25.40px;top:16.80px" width="11" height="11" viewBox="0 0 11 11"><g style="filter:grayscale(1)"><text x="0.2" y="4.9" font-family="Liberation Sans, sans-serif" font-size="5.4" fill="#111">A</text><text x="0.3" y="10.4" font-family="Liberation Sans, sans-serif" font-size="5.4" fill="#111">Z</text></g><path d="M8 .3l2.900 3.400H9.200v3h1.700L8 10.100 5.100 6.700h1.700v-3H5.100z" fill="#3b93ec" stroke="#1b6fd0" stroke-width=".5"/><path d="M8 1.600l1.200 1.500H8.500v4.200H7.500V3.100h-.7z" fill="#b9dcff"/></svg><svg style="position:absolute;left:41.80px;top:16.60px" width="12" height="12" viewBox="0 0 12 12"><path d="M3 0.4h5.6000000000000005l2.8 2.8v7.8h-8.4z" fill="#fcfcfc" stroke="#8e8e8e" stroke-width=".75"/><path d="M8.600000000000001 0.4v2.8h2.8" fill="#e4e4e4" stroke="#8e8e8e" stroke-width=".55"/><circle cx="3.8" cy="8" r="3.6" fill="#1c961c"/><circle cx="3.8" cy="8" r="2.9" fill="#2fb52f"/><path d="M3.8 6.1v3.8M1.9 8h3.8" stroke="#fff" stroke-width="1.9"/></svg><svg style="position:absolute;left:62.40px;top:16.60px" width="12" height="12" viewBox="0 0 12 12"><rect x=".5" y=".9" width="10" height="10" rx="1" fill="#fbfbfb" stroke="#8e8e8e" stroke-width=".75"/><path d="M2.2 9.9l.9-3 5.9-6 2.2 2-5.9 6.1z" fill="#f3ab35" stroke="#bf7412" stroke-width=".55"/><path d="M4 6.9l5-5.1.8.7-5 5.2z" fill="#ffd98a"/><path d="M2.2 9.9l.9-3 2.1 2.1z" fill="#4a2f16"/></svg><svg style="position:absolute;left:79.60px;top:16.40px" width="14" height="12" viewBox="0 0 14 12"><path d="M2.4 0.4h6.6000000000000005l2.8 2.8v6.000000000000001h-9.4z" fill="#fcfcfc" stroke="#8e8e8e" stroke-width=".75"/><path d="M9.0 0.4v2.8h2.8" fill="#e4e4e4" stroke="#8e8e8e" stroke-width=".55"/><circle cx="3.900" cy="8.700" r="2.200" fill="#bcd8f2" stroke="#c36a16" stroke-width="1.150"/><circle cx="10.300" cy="8.700" r="2.200" fill="#bcd8f2" stroke="#c36a16" stroke-width="1.150"/><path d="M6.300 8.300h1.600M.4 8.200l1.200.2M13.800 8.200l-1.200.2" stroke="#c36a16" stroke-width="1"/></svg><svg style="position:absolute;left:100.80px;top:18.50px" width="9.6" height="8.3" viewBox="0 0 9.6 8.3"><path d="M1.900 1.700l5.800 4.900M7.700 1.700L1.900 6.600" stroke="#dc2a18" stroke-width="3" stroke-linecap="square"/><path d="M2.100 1.900l5.400 4.500M7.500 1.900l-5.400 4.500" stroke="#f8896c" stroke-width="1.400" stroke-linecap="square"/></svg><div style="position:absolute;left:116.20px;top:14.60px;width:1.00px;height:14.60px;background:#a6a6a6;box-shadow:1px 0 0 #fff;"></div><svg style="position:absolute;left:122.00px;top:16.80px" width="11.4" height="11" viewBox="0 0 11.4 11"><path d="M1.5 5.300A4.300 4.300 0 0 1 7.600 2.500" fill="none" stroke="#4fae4f" stroke-width="2.100"/><path d="M6.700 .2L11 3.300 6.500 5.300z" fill="#4fae4f"/><path d="M2 4.600A3.800 3.800 0 0 1 7.400 2.300" fill="none" stroke="#8fd68f" stroke-width=".7"/><g transform="rotate(180 5.700 5.500)"><path d="M1.5 5.300A4.300 4.300 0 0 1 7.600 2.500" fill="none" stroke="#4fae4f" stroke-width="2.100"/><path d="M6.700 .2L11 3.300 6.500 5.300z" fill="#4fae4f"/><path d="M2 4.600A3.800 3.800 0 0 1 7.400 2.300" fill="none" stroke="#8fd68f" stroke-width=".7"/></g></svg><svg style="position:absolute;left:140.80px;top:16.80px" width="11.4" height="11" viewBox="0 0 11.4 11"><rect x="0.2" y="0.5" width="3" height="1.6" fill="#3c3c3c"/><rect x="0.2" y="3.1" width="3" height="1.6" fill="#3c3c3c"/><rect x="0.2" y="5.7" width="3" height="1.6" fill="#3c3c3c"/><rect x="0.2" y="8.3" width="3" height="1.6" fill="#3c3c3c"/><g transform="scale(.98 1)"><text x="3.8" y="9.4" font-family="Liberation Sans, sans-serif" font-size="11" font-weight="bold" fill="#2a80dc" stroke="#2a80dc" stroke-width=".35">Σ</text></g></svg><svg style="position:absolute;left:159.00px;top:16.40px" width="11.4" height="11.8" viewBox="0 0 11.4 11.8"><path d="M2.6 5V.6h5.2l1.2 1.2V5z" fill="#fff" stroke="#8a8a8a" stroke-width=".6"/><rect x=".5" y="4.4" width="10.4" height="5.2" rx="1.2" fill="#56a6f2" stroke="#2a6fbe" stroke-width=".5"/><rect x="1.2" y="5.2" width="9" height="1" fill="#a8d2fb"/><rect x=".9" y="7.1" width="9.6" height="1.5" fill="#1558aa"/><rect x="2" y="8.7" width="7.4" height="2.6" fill="#dfe4ea" stroke="#5c6672" stroke-width=".55"/></svg><div style="position:absolute;left:175.80px;top:14.60px;width:1.00px;height:14.60px;background:#a6a6a6;box-shadow:1px 0 0 #fff;"></div><svg style="position:absolute;left:459.40px;top:15.80px" width="9" height="12" viewBox="0 0 9 12"><g transform="scale(.9 1)"><text x="0.3" y="11.300" font-family="Liberation Sans, sans-serif" font-size="15.500" font-weight="bold" fill="#fff" stroke="#fff" stroke-width="2.200" opacity=".75">?</text><text x="0.3" y="11.300" font-family="Liberation Sans, sans-serif" font-size="15.500" font-weight="bold" fill="#8cc2f8" stroke="#2475d8" stroke-width=".9">?</text></g></svg><div style="position:absolute;left:3.20px;top:32.40px;width:139.20px;height:13.40px;background:#fff;border:1px solid #abadb3;box-sizing:border-box;"><svg style="position:absolute;left:126.6px;top:0" width="12" height="12" viewBox="0 0 12 12"><path d="M3.5 4.95L6 7.45L8.5 4.95" fill="none" stroke="#333" stroke-width="1.2"/></svg></div><svg style="position:absolute;left:148.20px;top:34.00px" width="10" height="9" viewBox="0 0 10 9"><path transform="translate(0 0) scale(1)" d="M.4 .5H9.600L5.900 4.700V8.600H4.100V4.700z" fill="#58abf6" stroke="#1f7ad8" stroke-width=".75" stroke-linejoin="round"/><path transform="translate(0 0) scale(1)" d="M1.800 1.100h6.400l-.7.800H2.500z" fill="#cfe8ff"/></svg><svg style="position:absolute;left:165.80px;top:34.00px" width="11.4" height="9" viewBox="0 0 11.4 9"><path transform="translate(1.6 0) scale(1)" d="M.4 .5H9.600L5.900 4.700V8.600H4.100V4.700z" fill="#58abf6" stroke="#1f7ad8" stroke-width=".75" stroke-linejoin="round"/><path transform="translate(1.6 0) scale(1)" d="M1.800 1.100h6.400l-.7.800H2.500z" fill="#cfe8ff"/><rect x=".3" y="6.600" width="2.300" height="2" fill="#505050"/><rect x=".6" y="4.300" width="1.200" height="1.100" fill="#777"/></svg><div style="position:absolute;left:182.20px;top:30.40px;width:16.00px;height:16.40px;background:#f7f7f7;border:1px solid;border-color:#a0a0a0 #fff #fff #a0a0a0;box-sizing:border-box;"></div><svg style="position:absolute;left:184.40px;top:33.40px" width="12" height="11.4" viewBox="0 0 12 11.4"><path transform="translate(2.6 0) scale(0.95)" d="M.4 .5H9.600L5.900 4.700V8.600H4.100V4.700z" fill="#58abf6" stroke="#1f7ad8" stroke-width=".75" stroke-linejoin="round"/><path transform="translate(2.6 0) scale(0.95)" d="M1.800 1.100h6.400l-.7.800H2.500z" fill="#cfe8ff"/><circle cx="4.800" cy="4.600" r="2.300" fill="#f6d6b6"/><path d="M2.300 4.300c-.2-3.200 5.200-3.200 5 0-1.400-1.100-3.600-1.100-5 0z" fill="#9a3412"/><rect x="3.700" y="4.500" width=".8" height=".9" fill="#333"/><rect x="5.300" y="4.500" width=".8" height=".9" fill="#333"/><path d="M1.300 10.400c0-4.300 7.200-4.300 7.200 0z" fill="#474e5a"/><path d="M4.300 7.200l.6 1.800.6-1.800z" fill="#e8ecf0"/><circle cx="1.100" cy="9.900" r="1.050" fill="#f2a43c"/><circle cx="8.800" cy="9.900" r="1.050" fill="#f2a43c"/></svg><div style="position:absolute;left:200.20px;top:30.40px;width:16.00px;height:16.40px;background:#f7f7f7;border:1px solid;border-color:#a0a0a0 #fff #fff #a0a0a0;box-sizing:border-box;"></div><svg style="position:absolute;left:202.40px;top:33.80px" width="12" height="11" viewBox="0 0 12 11"><path transform="translate(2.4 0) scale(0.95)" d="M.4 .5H9.600L5.900 4.700V8.600H4.100V4.700z" fill="#58abf6" stroke="#1f7ad8" stroke-width=".75" stroke-linejoin="round"/><path transform="translate(2.4 0) scale(0.95)" d="M1.800 1.100h6.400l-.7.800H2.500z" fill="#cfe8ff"/><circle cx="3.600" cy="6.900" r="3.300" fill="#e23c26" stroke="#b42616" stroke-width=".5"/><rect x="1.500" y="6.100" width="4.200" height="1.600" fill="#fff"/></svg><div style="position:absolute;left:0.00px;top:47.60px;width:474.20px;height:161.00px;border-top:1px solid #9b9b9b;border-left:1px solid #9b9b9b;box-sizing:border-box;overflow:hidden;"><div style="position:absolute;left:-1.00px;top:-1.00px;width:474.20px;height:161.00px;"><div style="position:absolute;left:0.00px;top:0.00px;width:474.20px;height:161.00px;background:#fff;"></div><div style="position:absolute;left:0.00px;top:0.80px;width:461.00px;height:12.30px;background:linear-gradient(#fbfcff 0%,#eef2fd 45%,#d3defa 100%);border-bottom:1px solid #9aa0ad;box-sizing:border-box;"></div><div style="position:absolute;left:9.20px;top:101.86px;width:451.80px;height:12.68px;background:#3399ff;"></div><div style="position:absolute;left:1.00px;top:13.10px;width:8.20px;height:12.68px;background:linear-gradient(90deg,#f7f9ff,#dbe4fa);"></div><div style="position:absolute;left:1.00px;top:25.78px;width:8.20px;height:12.68px;background:linear-gradient(90deg,#f7f9ff,#dbe4fa);"></div><div style="position:absolute;left:1.00px;top:38.46px;width:8.20px;height:12.68px;background:linear-gradient(90deg,#f7f9ff,#dbe4fa);"></div><div style="position:absolute;left:1.00px;top:51.14px;width:8.20px;height:12.68px;background:linear-gradient(90deg,#f7f9ff,#dbe4fa);"></div><div style="position:absolute;left:1.00px;top:63.82px;width:8.20px;height:12.68px;background:linear-gradient(90deg,#f7f9ff,#dbe4fa);"></div><div style="position:absolute;left:1.00px;top:76.50px;width:8.20px;height:12.68px;background:linear-gradient(90deg,#f7f9ff,#dbe4fa);"></div><div style="position:absolute;left:1.00px;top:89.18px;width:8.20px;height:12.68px;background:linear-gradient(90deg,#f7f9ff,#dbe4fa);"></div><div style="position:absolute;left:1.00px;top:101.86px;width:8.20px;height:12.68px;background:linear-gradient(90deg,#fdf3dc,#f9dca6);"></div><div style="position:absolute;left:1.00px;top:114.54px;width:8.20px;height:12.68px;background:linear-gradient(90deg,#f7f9ff,#dbe4fa);"></div><div style="position:absolute;left:1.00px;top:127.22px;width:8.20px;height:12.68px;background:linear-gradient(90deg,#f7f9ff,#dbe4fa);"></div><svg style="position:absolute;left:1.60px;top:103.16px" width="8" height="10" viewBox="0 0 8 10"><path d="M1.2 .8L6 5 1.2 9.2z" fill="#000"/></svg><div style="position:absolute;left:0.00px;top:25.28px;width:461.00px;height:1.00px;background:#cdcdcd;"></div><div style="position:absolute;left:0.00px;top:37.96px;width:461.00px;height:1.00px;background:#cdcdcd;"></div><div style="position:absolute;left:0.00px;top:50.64px;width:461.00px;height:1.00px;background:#cdcdcd;"></div><div style="position:absolute;left:0.00px;top:63.32px;width:461.00px;height:1.00px;background:#cdcdcd;"></div><div style="position:absolute;left:0.00px;top:76.00px;width:461.00px;height:1.00px;background:#cdcdcd;"></div><div style="position:absolute;left:0.00px;top:88.68px;width:461.00px;height:1.00px;background:#cdcdcd;"></div><div style="position:absolute;left:0.00px;top:101.36px;width:461.00px;height:1.00px;background:#cdcdcd;"></div><div style="position:absolute;left:0.00px;top:114.04px;width:461.00px;height:1.00px;background:#cdcdcd;"></div><div style="position:absolute;left:0.00px;top:126.72px;width:461.00px;height:1.00px;background:#cdcdcd;"></div><div style="position:absolute;left:0.00px;top:139.40px;width:461.00px;height:1.00px;background:#cdcdcd;"></div><div style="position:absolute;left:8.70px;top:0.80px;width:1.00px;height:12.30px;background:#7d8494;"></div><div style="position:absolute;left:8.70px;top:13.10px;width:1.00px;height:126.80px;background:#7d8494;"></div><div style="position:absolute;left:148.80px;top:0.80px;width:1.00px;height:12.30px;background:#7d8494;"></div><div style="position:absolute;left:148.80px;top:13.10px;width:1.00px;height:126.80px;background:#c2c2c2;"></div><span class="t" style="left:10.80px;top:1.75px;font-size:8.0px;transform:scaleX(0.9278);color:#000;text-shadow:0 0 .6px rgba(0,0,0,0.5);">Faila vārds</span><span class="t" style="left:151.00px;top:1.75px;font-size:8.0px;transform:scaleX(0.9447);color:#000;text-shadow:0 0 .6px rgba(0,0,0,0.5);">Apraksts</span><svg style="position:absolute;left:142.10px;top:5.60px" width="5" height="4" viewBox="0 0 5 4"><path d="M2.500 .1L4.900 3.900H.1z" fill="#111"/></svg><span class="t" style="left:11.00px;top:14.64px;font-size:8.0px;transform:scaleX(0.8499);color:#000;text-shadow:0 0 .6px rgba(0,0,0,0.5);">MUEXPFIDARNCEUR2.DLL</span><span class="t" style="left:151.20px;top:14.64px;font-size:8.0px;transform:scaleX(0.9186);color:#000;text-shadow:0 0 .6px rgba(0,0,0,0.5);">MU imports/eksports no RNC/uz FiDaViSta</span><span class="t" style="left:11.00px;top:27.32px;font-size:8.0px;transform:scaleX(0.8790);color:#000;text-shadow:0 0 .6px rgba(0,0,0,0.5);">MUEXPFIDAVISTA.DLL</span><span class="t" style="left:151.20px;top:27.32px;font-size:8.0px;transform:scaleX(0.9348);color:#000;text-shadow:0 0 .6px rgba(0,0,0,0.5);">MU eksports uz LKA vienoto formātu (FIDAVISTA)</span><span class="t" style="left:11.00px;top:40.00px;font-size:8.0px;transform:scaleX(0.8812);color:#000;text-shadow:0 0 .6px rgba(0,0,0,0.5);">MUEXPFIDAVISTA2.DLL</span><span class="t" style="left:151.20px;top:40.00px;font-size:8.0px;transform:scaleX(0.9348);color:#000;text-shadow:0 0 .6px rgba(0,0,0,0.5);">MU eksports uz LKA vienoto formātu (FIDAVISTA)</span><span class="t" style="left:11.00px;top:52.68px;font-size:8.0px;transform:scaleX(0.8692);color:#000;text-shadow:0 0 .6px rgba(0,0,0,0.5);">MUEXPFIDAVISTARNC.DLL</span><span class="t" style="left:151.20px;top:52.68px;font-size:8.0px;transform:scaleX(0.9186);color:#000;text-shadow:0 0 .6px rgba(0,0,0,0.5);">MU imports/eksports no RNC/uz FiDaViSta</span><span class="t" style="left:11.00px;top:65.36px;font-size:8.0px;transform:scaleX(0.8676);color:#000;text-shadow:0 0 .6px rgba(0,0,0,0.5);">MUEXPHIPONET.DLL</span><span class="t" style="left:151.20px;top:65.36px;font-size:8.0px;transform:scaleX(0.9401);color:#000;text-shadow:0 0 .6px rgba(0,0,0,0.5);">MU exports uz "HipoNet" (Telehansas formāts)</span><span class="t" style="left:11.00px;top:78.04px;font-size:8.0px;transform:scaleX(0.8481);color:#000;text-shadow:0 0 .6px rgba(0,0,0,0.5);">MUEXPHVB.DLL</span><span class="t" style="left:151.20px;top:78.04px;font-size:8.0px;transform:scaleX(0.9169);color:#000;text-shadow:0 0 .6px rgba(0,0,0,0.5);">MU exports uz Vereinsbank Rīga</span><span class="t" style="left:11.00px;top:90.72px;font-size:8.0px;transform:scaleX(0.8622);color:#000;text-shadow:0 0 .6px rgba(0,0,0,0.5);">MUEXPINORD.DLL</span><span class="t" style="left:151.20px;top:90.72px;font-size:8.0px;transform:scaleX(0.9348);color:#000;text-shadow:0 0 .6px rgba(0,0,0,0.5);">MU eksports uz LKA vienoto formātu (FIDAVISTA)</span><span class="t" style="left:11.00px;top:103.40px;font-size:8.0px;transform:scaleX(0.8757);color:#fff;text-shadow:0 0 .6px rgba(255,255,255,0.5);">MUEXPISO20022.DLL</span><span class="t" style="left:151.20px;top:103.40px;font-size:8.0px;transform:scaleX(0.9309);color:#fff;text-shadow:0 0 .6px rgba(255,255,255,0.5);">MU eksports uz ISO20022 formātu</span><span class="t" style="left:11.00px;top:116.08px;font-size:8.0px;transform:scaleX(0.8386);color:#000;text-shadow:0 0 .6px rgba(0,0,0,0.5);">MUEXPKRAJBANKA.DLL</span><span class="t" style="left:151.20px;top:116.08px;font-size:8.0px;transform:scaleX(0.9299);color:#000;text-shadow:0 0 .6px rgba(0,0,0,0.5);">Eksports uz Krājbanku (Biroja Banka)</span><span class="t" style="left:11.00px;top:128.76px;font-size:8.0px;transform:scaleX(0.8515);color:#000;text-shadow:0 0 .6px rgba(0,0,0,0.5);">MUEXPLATEKO.DLL</span><span class="t" style="left:151.20px;top:128.76px;font-size:8.0px;transform:scaleX(0.9279);color:#000;text-shadow:0 0 .6px rgba(0,0,0,0.5);">MU exports uz Lateko banku</span><div style="position:absolute;left:461.00px;top:0.80px;width:13.20px;height:148.20px;background:#f0f0f0;"></div><div style="position:absolute;left:462.20px;top:52.20px;width:9.40px;height:30.00px;background:#cdcdcd;"></div><div style="position:absolute;left:0.00px;top:149.00px;width:474.20px;height:12.00px;background:#f0f0f0;"></div><div style="position:absolute;left:13.40px;top:150.00px;width:11.60px;height:10.00px;background:#cdcdcd;"></div><svg style="position:absolute;left:-325.2px;top:-222.4px" width="810" height="413" viewBox="0 0 810 413"><path d="M790.0 231.70000000000002L792.6 229.1L795.2 231.70000000000002" fill="none" stroke="#444" stroke-width="1.3"/><path d="M790.0 363.3L792.6 365.90000000000003L795.2 363.3" fill="none" stroke="#444" stroke-width="1.3"/><path d="M333.1 374.79999999999995L330.5 377.4L333.1 380.0" fill="none" stroke="#444" stroke-width="1.3"/><path d="M779.7 374.79999999999995L782.3 377.4L779.7 380.0" fill="none" stroke="#444" stroke-width="1.3"/></svg></div></div><div style="position:absolute;left:178.40px;top:210.20px;width:50.60px;height:14.60px;background:linear-gradient(#f2f2f2,#e6e6e6);border:1px solid #3399ff;box-sizing:border-box;"></div><span class="t" style="left:188.24px;top:212.10px;font-size:8.0px;transform:scaleX(0.9332);color:#000;text-shadow:0 0 .6px rgba(0,0,0,0.5);">Izvēlēties</span><div style="position:absolute;left:244.60px;top:210.20px;width:51.00px;height:14.60px;background:linear-gradient(#f2f2f2,#e6e6e6);border:1px solid #acacac;box-sizing:border-box;"></div><span class="t" style="left:260.65px;top:212.10px;font-size:8.0px;transform:scaleX(0.9350);color:#000;text-shadow:0 0 .6px rgba(0,0,0,0.5);">Atcelt</span></div></div>
<div style="position:absolute;left:499.80px;top:379.00px;width:59.20px;height:22.80px;border:3px solid #fb0007;border-radius:1.5px;box-sizing:border-box;"></div>
</body></html>
